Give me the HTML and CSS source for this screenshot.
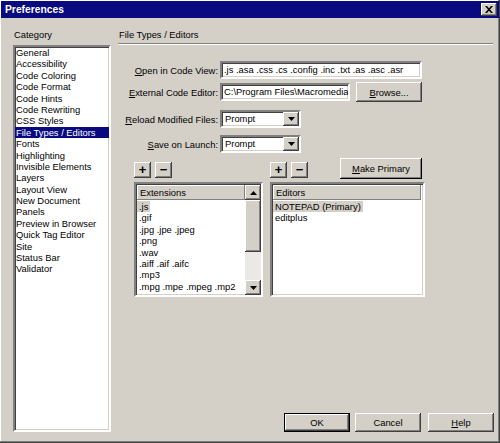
FILE: index.html
```html
<!DOCTYPE html>
<html>
<head>
<meta charset="utf-8">
<title>Preferences</title>
<link rel="stylesheet" href="styles.css">
</head>
<body>
<div class="window">
  <div class="titlebar">
    <span class="title">Preferences</span>
    <span class="close-btn">
      <svg width="8" height="7" viewBox="0 0 8 7"><path d="M0 0h2l2 2.3L6 0h2L5 3.5 8 7H6L4 4.7 2 7H0l3-3.5z" fill="#000"/></svg>
    </span>
  </div>
  <div class="body">
    <div class="sidebar">
      <div class="cat-label">Category</div>
      <ul class="catlist">
        <li>General</li>
        <li>Accessibility</li>
        <li>Code Coloring</li>
        <li>Code Format</li>
        <li>Code Hints</li>
        <li>Code Rewriting</li>
        <li>CSS Styles</li>
        <li class="selected">File Types / Editors</li>
        <li>Fonts</li>
        <li>Highlighting</li>
        <li>Invisible Elements</li>
        <li>Layers</li>
        <li>Layout View</li>
        <li>New Document</li>
        <li>Panels</li>
        <li>Preview in Browser</li>
        <li>Quick Tag Editor</li>
        <li>Site</li>
        <li>Status Bar</li>
        <li>Validator</li>
      </ul>
    </div>
    <div class="main">
      <div class="section-title">File Types / Editors</div>
      <div class="form">
        <div class="row row-1">
          <div class="row-label"><u>O</u>pen in Code View:</div>
          <div class="textbox tb-open">.js .asa .css .cs .config .inc .txt .as .asc .asr</div>
        </div>
        <div class="row row-2">
          <div class="row-label"><u>E</u>xternal Code Editor:</div>
          <div class="textbox tb-ext">C:\Program Files\Macromedia</div>
          <div class="btn btn-browse"><u>B</u>rowse...</div>
        </div>
        <div class="row row-3">
          <div class="row-label"><u>R</u>eload Modified Files:</div>
          <div class="combo">
            <span class="combo-text">Prompt</span>
            <span class="combo-btn"><svg width="7" height="4" viewBox="0 0 7 4"><path d="M0 0h7L3.5 4z" fill="#000"/></svg></span>
          </div>
        </div>
        <div class="row row-4">
          <div class="row-label"><u>S</u>ave on Launch:</div>
          <div class="combo">
            <span class="combo-text">Prompt</span>
            <span class="combo-btn"><svg width="7" height="4" viewBox="0 0 7 4"><path d="M0 0h7L3.5 4z" fill="#000"/></svg></span>
          </div>
        </div>
      </div>
      <div class="lists">
        <div class="col col-ext">
          <div class="toolbar">
            <div class="btn btn-small">+</div>
            <div class="btn btn-small">&minus;</div>
          </div>
          <div class="listbox">
            <div class="lb-content">
              <div class="lb-header">Extensions</div>
              <div class="lb-items">
                <div><span class="item hl">.js</span></div>
                <div><span class="item">.gif</span></div>
                <div><span class="item">.jpg .jpe .jpeg</span></div>
                <div><span class="item">.png</span></div>
                <div><span class="item">.wav</span></div>
                <div><span class="item">.aiff .aif .aifc</span></div>
                <div><span class="item">.mp3</span></div>
                <div><span class="item">.mpg .mpe .mpeg .mp2</span></div>
              </div>
            </div>
            <div class="scrollbar">
              <div class="sb-btn"><svg width="7" height="4" viewBox="0 0 7 4"><path d="M3.5 0L7 4H0z" fill="#000"/></svg></div>
              <div class="sb-thumb"></div>
              <div class="sb-track"></div>
              <div class="sb-btn"><svg width="7" height="4" viewBox="0 0 7 4"><path d="M0 0h7L3.5 4z" fill="#000"/></svg></div>
            </div>
          </div>
        </div>
        <div class="col col-ed">
          <div class="toolbar">
            <div class="btn btn-small">+</div>
            <div class="btn btn-small">&minus;</div>
            <div class="btn btn-primary"><u>M</u>ake Primary</div>
          </div>
          <div class="listbox">
            <div class="lb-content">
              <div class="lb-header">Editors</div>
              <div class="lb-items">
                <div><span class="item hl">NOTEPAD (Primary)</span></div>
                <div><span class="item">editplus</span></div>
              </div>
            </div>
          </div>
        </div>
      </div>
      <div class="footer">
        <div class="btn btn-foot btn-default">OK</div>
        <div class="btn btn-foot">Cancel</div>
        <div class="btn btn-foot btn-help"><u>H</u>elp</div>
      </div>
    </div>
  </div>
</div>
</body>
</html>
```
FILE: styles.css
```css
* { box-sizing: border-box; }
html, body { margin: 0; padding: 0; }
body {
  font-family: "Liberation Sans", Arial, sans-serif;
  font-size: 9.4px;
  color: #000;
  background: #d4d0c8;
}
u { text-decoration: underline; text-underline-offset: 1px; }

.window {
  width: 500px;
  height: 443px;
  background: #d4d0c8;
  padding: 1px 1px 2px 1px;
  box-shadow: inset -1px -1px #404040, inset -2px -2px #808080, inset 1px 1px #ffffff;
  display: flex;
  flex-direction: column;
  overflow: hidden;
}

.titlebar {
  height: 17px;
  flex: none;
  background: #0a0a80;
  display: flex;
  align-items: center;
  justify-content: space-between;
  padding: 0 2px 0 4px;
}
.title {
  color: #fff;
  font-weight: bold;
  font-size: 10.3px;
}
.close-btn {
  width: 16px;
  height: 13px;
  background: #d4d0c8;
  box-shadow: inset -1px -1px #404040, inset 1px 1px #ffffff, inset -2px -2px #808080;
  display: flex;
  align-items: center;
  justify-content: center;
}

.body {
  flex: 1;
  display: flex;
  min-height: 0;
}

.sidebar {
  width: 110px;
  flex: none;
  padding-left: 12px;
  display: flex;
  flex-direction: column;
}
.cat-label {
  height: 27px;
  padding-top: 11px;
  padding-left: 1px;
  line-height: 11.4px;
}
.catlist {
  flex: 1;
  margin: 0 0 9px 0;
  padding: 0;
  list-style: none;
  background: #fff;
  border: 2px solid;
  border-color: #808080 #ffffff #ffffff #808080;
  box-shadow: inset 1px 1px #404040, inset -1px -1px #d4d0c8;
  overflow: hidden;
}
.catlist li {
  line-height: 11.4px;
  height: 11.4px;
  padding-left: 1px;
  white-space: nowrap;
}
.catlist li.selected {
  background: #0a0a80;
  color: #fff;
}

.main {
  flex: 1;
  display: flex;
  flex-direction: column;
  margin-left: 8px;
  padding-right: 6px;
}
.section-title {
  height: 26px;
  padding-top: 11px;
  line-height: 11.4px;
  border-bottom: 1px solid #808080;
  box-shadow: 0 1px #ffffff;
  margin-left: -1px;
  padding-left: 1px;
}

.form { margin-top: 17px; }
.row {
  display: flex;
  align-items: center;
}
.row-1 { height: 18px; }
.row-2 { height: 20px; margin-top: 3px; }
.row-3 { height: 18px; margin-top: 8px; }
.row-4 { height: 18px; margin-top: 7px; }
.row-label {
  width: 99px;
  text-align: right;
  white-space: nowrap;
  margin-right: 2px;
}

.textbox {
  height: 18px;
  background: #fff;
  border: 2px solid;
  border-color: #808080 #ffffff #ffffff #808080;
  box-shadow: inset 1px 1px #404040, inset -1px -1px #d4d0c8;
  padding-left: 2px;
  line-height: 14px;
  white-space: nowrap;
  overflow: hidden;
}
.tb-open { width: 202px; }
.tb-ext { width: 130px; }

.btn {
  background: #d4d0c8;
  box-shadow: inset -1px -1px #404040, inset 1px 1px #ffffff, inset -2px -2px #808080;
  display: flex;
  align-items: center;
  justify-content: center;
  white-space: nowrap;
}
.btn-browse {
  width: 66px;
  height: 20px;
  margin-left: 6px;
}

.combo {
  width: 81px;
  height: 18px;
  background: #fff;
  border: 2px solid;
  border-color: #808080 #ffffff #ffffff #808080;
  box-shadow: inset 1px 1px #404040, inset -1px -1px #d4d0c8;
  display: flex;
  align-items: stretch;
}
.combo-text {
  flex: 1;
  padding-left: 3px;
  padding-top: 1px;
  line-height: 12px;
}
.combo-btn {
  width: 16px;
  margin: 0 0 0 0;
  background: #d4d0c8;
  box-shadow: inset -1px -1px #404040, inset 1px 1px #ffffff, inset -2px -2px #808080;
  display: flex;
  align-items: center;
  justify-content: center;
}

.lists {
  display: flex;
  gap: 7px;
  margin-top: 5px;
  padding-left: 15px;
}
.col-ext { width: 129px; }
.col-ed { width: 155px; }
.toolbar {
  height: 21px;
  display: flex;
  align-items: flex-end;
  gap: 4px;
}
.btn-small {
  width: 17px;
  height: 16px;
  margin-bottom: 1px;
  font-weight: bold;
  font-size: 13px;
  line-height: 1;
  padding-bottom: 1px;
}
.btn-primary {
  width: 82px;
  height: 21px;
  margin-left: auto;
  margin-right: 3px;
  box-shadow: inset -1px -1px #000000, inset 1px 1px #ffffff, inset -2px -2px #808080;
}

.listbox {
  margin-top: 3px;
  height: 115px;
  background: #fff;
  border: 2px solid;
  border-color: #808080 #ffffff #ffffff #808080;
  box-shadow: inset 1px 1px #404040, inset -1px -1px #d4d0c8;
  display: flex;
  overflow: hidden;
}
.lb-content {
  flex: 1;
  min-width: 0;
  display: flex;
  flex-direction: column;
  overflow: hidden;
  padding: 1px 0 0 1px;
}
.col-ed .lb-content { padding-right: 2px; }
.lb-header {
  height: 15px;
  flex: none;
  background: #d4d0c8;
  box-shadow: inset -1px -1px #808080, inset 1px 1px #ffffff;
  padding-left: 3px;
  line-height: 15px;
}
.lb-items {
  padding-top: 1px;
  overflow: hidden;
}
.lb-items > div {
  height: 11.4px;
  line-height: 11.4px;
  white-space: nowrap;
}
.item {
  display: inline-block;
  padding: 0 2px 0 2px;
  height: 11.4px;
}
.item.hl { background: #d4d0c8; }

.scrollbar {
  width: 16px;
  flex: none;
  display: flex;
  flex-direction: column;
  padding-top: 1px;
}
.sb-btn {
  height: 15px;
  flex: none;
  background: #d4d0c8;
  box-shadow: inset -1px -1px #404040, inset 1px 1px #ffffff, inset -2px -2px #808080;
  display: flex;
  align-items: center;
  justify-content: center;
}
.sb-thumb {
  height: 52px;
  flex: none;
  background: #d4d0c8;
  box-shadow: inset -1px -1px #404040, inset 1px 1px #ffffff, inset -2px -2px #808080;
}
.sb-track {
  flex: 1;
  background: #ebe9e5;
}

.footer {
  margin-top: auto;
  margin-bottom: 9px;
  margin-right: -1px;
  display: flex;
  justify-content: flex-end;
  gap: 5px;
}
.btn-foot {
  width: 66px;
  height: 19px;
}
.btn-default {
  border: 1px solid #000;
}
.btn-help { margin-left: 2px; }
```
